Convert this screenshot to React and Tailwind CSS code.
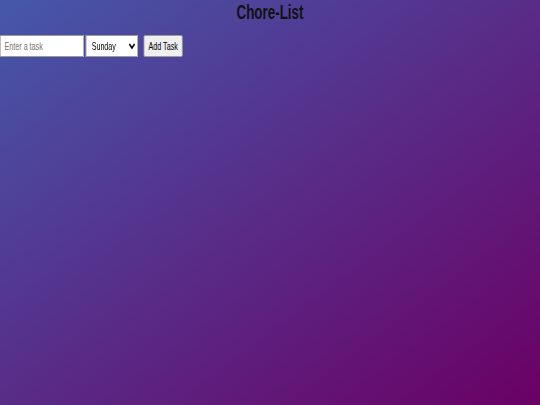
export default function App() {
  return (
    <div className="w-[540px] h-[405px] bg-[linear-gradient(to_bottom_right,#4558aa,#6b0065)] text-black font-['Liberation_Sans',Arial,sans-serif]">
      <h1 className="text-center text-[20px] font-bold leading-[22px] pt-[1px] text-[#111]">
        <span className="inline-block scale-x-[0.67]">Chore-List</span>
      </h1>
      {/* row is drawn wide and squeezed to get the narrow face */}
      <div className="flex items-center mt-[12px] w-[831px] origin-left scale-x-[0.65]">
        <input
          type="text"
          placeholder="Enter a task"
          className="w-[129px] h-[22px] bg-white border border-[#9a9a9a] px-[6px] text-[11px] outline-none font-['Liberation_Sans',Arial,sans-serif] placeholder:text-[#757575]"
        />
        <select className="ml-[3px] w-[80px] h-[22px] bg-white border border-[#9a9a9a] pl-[4px] text-[11px] font-['Liberation_Sans',Arial,sans-serif]">
          <option>Sunday</option>
          <option>Monday</option>
          <option>Tuesday</option>
          <option>Wednesday</option>
          <option>Thursday</option>
          <option>Friday</option>
          <option>Saturday</option>
        </select>
        <button className="ml-[9px] w-[60px] h-[22px] bg-[#efefef] border border-[#9a9a9a] rounded-[2px] text-[11px] whitespace-nowrap font-['Liberation_Sans',Arial,sans-serif]">
          Add Task
        </button>
      </div>
    </div>
  )
}
